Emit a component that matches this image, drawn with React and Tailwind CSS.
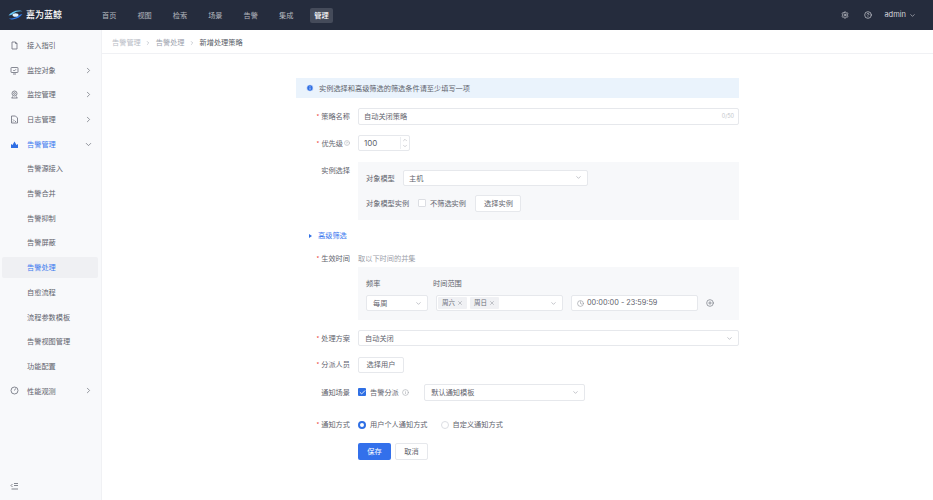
import React from "react";
import {
  ChevronDown,
  ChevronRight,
  CirclePlus,
  Clock,
  HelpCircle,
  Info,
  Settings,
  X,
  Check,
} from "lucide-react";

const nav = ["首页", "视图", "检索", "场景", "告警", "集成", "管理"];

const subMenu = [
  "告警源接入",
  "告警合并",
  "告警抑制",
  "告警屏蔽",
  "告警处理",
  "自愈流程",
  "流程参数模板",
  "告警视图管理",
  "功能配置",
];

const Glyph = ({ children, className = "text-[#71757f]" }) => (
  <svg width="9" height="9" viewBox="0 0 18 18" fill="none" stroke="currentColor" strokeWidth="1.7" className={className}>
    {children}
  </svg>
);

const DocIcon = () => (
  <Glyph>
    <path d="M4 2h7l3 3v11H4z" />
    <path d="M11 2v3h3" />
  </Glyph>
);

const MonitorIcon = () => (
  <Glyph>
    <rect x="2" y="3" width="14" height="10" rx="1" />
    <path d="M6 16h6M6.5 8l2 2 3.500-3.500" />
  </Glyph>
);

const TargetIcon = () => (
  <Glyph>
    <circle cx="9" cy="7" r="5" />
    <circle cx="9" cy="7" r="1.800" />
    <path d="M3 16h12M5 13l-1 3M13 13l1 3" />
  </Glyph>
);

const LogIcon = () => (
  <Glyph>
    <path d="M3 2h8l4 4v10H3z" />
    <path d="M6 9l2 2-2 2M10 13h2" />
  </Glyph>
);

const AlarmIcon = () => (
  <svg width="9" height="9" viewBox="0 0 18 18" fill="#2f6fe4">
    <path d="M2 16V8l3 2 4-7 4 7 3-2v8z" />
  </svg>
);

const GaugeIcon = () => (
  <Glyph>
    <circle cx="9" cy="9" r="7" />
    <path d="M9 9l2-4" />
  </Glyph>
);

const CollapseIcon = () => (
  <svg width="9" height="9" viewBox="0 0 18 18" fill="none" stroke="#5f636d" strokeWidth="1.5">
    <path d="M5 4L2 7l3 3M8 3h8M8 7h8M3 14h13" />
  </svg>
);

const MenuItem = ({ icon, label, arrow, active }) => (
  <div className="h-[24.7px] flex items-center pl-[10px] pr-[8px] shrink-0">
    <span className="w-[17px] shrink-0 flex">{icon}</span>
    <span className={`flex-1 ${active ? "text-[#3a78ef]" : "text-[#5f636d]"}`}>{label}</span>
    {arrow === "right" && <ChevronRight size={9} className="text-[#71757f]" />}
    {arrow === "down" && <ChevronDown size={9} className="text-[#71757f]" />}
  </div>
);

const Sidebar = () => (
  <aside className="w-[102px] shrink-0 bg-[#f8f9fb] border-r border-[#f0f1f4] flex flex-col pt-[3px] pb-[9px]">
    <MenuItem icon={<DocIcon />} label="接入指引" />
    <MenuItem icon={<MonitorIcon />} label="监控对象" arrow="right" />
    <MenuItem icon={<TargetIcon />} label="监控管理" arrow="right" />
    <MenuItem icon={<LogIcon />} label="日志管理" arrow="right" />
    <MenuItem icon={<AlarmIcon />} label="告警管理" arrow="down" active />
    {subMenu.map((item) =>
      item === "告警处理" ? (
        <div key={item} className="h-[24.7px] flex items-center shrink-0 px-[2px]">
          <div className="w-[96px] h-[21px] flex items-center pl-[25px] bg-[#eff0f3] rounded-[2px] text-[#3a78ef]">
            {item}
          </div>
        </div>
      ) : (
        <div key={item} className="h-[24.7px] flex items-center pl-[27px] text-[#5f636d] shrink-0">
          {item}
        </div>
      )
    )}
    <MenuItem icon={<GaugeIcon />} label="性能观测" arrow="right" />
    <div className="mt-auto pl-[10px]">
      <CollapseIcon />
    </div>
  </aside>
);

const Logo = () => (
  <div className="flex items-center gap-[3px] w-[102px] pl-[8px] shrink-0">
    <svg width="15" height="10" viewBox="0 0 30 20">
      <path d="M1 11C5 5 13 1 22 1c3 0 5 .5 7 2-7-1-13 0-18 4-3 2.500-6 4-10 4Z" fill="#62c6f6" />
      <path d="M29 8c-4 6-11 10-20 11-3 0-5-.5-7-2 7 0 13-1 18-5 3-2.500 6-4 9-4Z" fill="#2f7bea" />
      <ellipse cx="15" cy="10" rx="6" ry="3.500" fill="#dff2ff" />
    </svg>
    <span className="text-white text-[9px] font-medium">嘉为蓝鲸</span>
  </div>
);

const Header = () => (
  <header className="h-[30px] shrink-0 bg-[#252c3d] flex items-center">
    <Logo />
    <nav className="flex items-center gap-[21px]">
      {nav.map((item) =>
        item === "管理" ? (
          <span key={item} className="bg-[#454b5a] text-white font-medium rounded-[2px] px-[4px] h-[15px] -mx-[4px] flex items-center">
            {item}
          </span>
        ) : (
          <span key={item} className="text-[#b3b6bd]">
            {item}
          </span>
        )
      )}
    </nav>
    <div className="ml-auto flex items-center text-[#d5d7dc] pr-[17px]">
      <Settings size={8} className="mr-[15px]" />
      <HelpCircle size={8} className="mr-[12px]" />
      <span className="mr-[3px] text-[7.500px] font-['Inter']">admin</span>
      <ChevronDown size={7} />
    </div>
  </header>
);

const Field = ({ label, required, hint, className = "", children }) => (
  <div className={`flex ${className}`}>
    <div className="w-[54px] shrink-0 h-[16.500px] flex items-center justify-end text-[#5f636d]">
      {required && <span className="text-[#ea3636] mr-[2px] text-[6px]">*</span>}
      {label}
      {hint && <HelpCircle size={6} className="text-[#a9acb3] ml-[1px]" />}
    </div>
    <div className="flex-1 ml-[8px] min-w-0">{children}</div>
  </div>
);

const Select = ({ value, className = "" }) => (
  <div className={`h-[16.500px] bg-white border border-[#e6e8ec] rounded-[2px] flex items-center justify-between pl-[6px] pr-[5px] text-[#5f636d] ${className}`}>
    <span>{value}</span>
    <ChevronDown size={7} className="text-[#9a9da5]" />
  </div>
);

const Button = ({ children, className = "" }) => (
  <div className={`h-[16.500px] bg-white border border-[#e6e8ec] rounded-[2px] flex items-center justify-center text-[#5f636d] ${className}`}>
    {children}
  </div>
);

const Tag = ({ children }) => (
  <span className="h-[12px] bg-[#f0f1f4] rounded-[1px] px-[4px] flex items-center gap-[2px] text-[6.500px] text-[#6b6f78]">
    {children}
    <X size={6} className="text-[#8d9098]" />
  </span>
);

const Form = () => (
  <div className="w-[443px] mx-auto pt-[24px]">
    <div className="h-[20px] bg-[#eaf3fc] flex items-center pl-[10px] text-[#5f636d]">
      <Info size={8} fill="#2f6fe4" className="text-white mr-[5px]" />
      实例选择和高级筛选的筛选条件请至少填写一项
    </div>

    <Field label="策略名称" required className="mt-[10.300px]">
      <div className="h-[16.500px] bg-white border border-[#e6e8ec] rounded-[2px] flex items-center justify-between pl-[5px] pr-[4px] text-[#5f636d]">
        <span>自动关闭策略</span>
        <span className="text-[5.500px] text-[#c2c4ca] font-['Inter']">0/50</span>
      </div>
    </Field>

    <Field label="优先级" required hint className="mt-[10.200px]">
      <div className="w-[52px] h-[16.500px] bg-white border border-[#e6e8ec] rounded-[2px] flex items-center justify-between pl-[5px] pr-[1px] text-[8px] text-[#5f636d]">
        <span className="font-['Inter']">100</span>
        <span className="flex flex-col text-[#a4a7ae] border-l border-[#eceef1] pl-[1px]">
          <ChevronDown size={6} className="rotate-180" />
          <ChevronDown size={6} />
        </span>
      </div>
    </Field>

    <Field label="实例选择" className="mt-[10.200px]">
      <div className="h-[58px] bg-[#f7f8fa] pl-[8px] pt-[8px]">
        <div className="flex items-center">
          <span className="w-[37px] text-[#5f636d]">对象模型</span>
          <Select value="主机" className="w-[185px] !pl-[5px]" />
        </div>
        <div className="flex items-center mt-[9px]">
          <span className="w-[51px] text-[#5f636d] shrink-0">对象模型实例</span>
          <span className="w-[8px] h-[8px] bg-white border border-[#dcdee3] rounded-[1px] ml-[1px] mr-[4px]" />
          <span className="text-[#5f636d]">不筛选实例</span>
          <Button className="w-[46px] ml-[9.500px]">选择实例</Button>
        </div>
      </div>
    </Field>

    <div className="flex items-center mt-[11px] h-[10px] pl-[13px] text-[#3a78ef]">
      <span className="w-0 h-0 border-y-[2.500px] border-y-transparent border-l-[3px] border-l-[#2f6fe4] mr-[6px]" />
      高级筛选
    </div>

    <Field label="生效时间" required className="mt-[9.750px]">
      <div className="h-[10px] flex items-center text-[#9da1aa] mt-[3.250px]">取以下时间的并集</div>
    </Field>

    <div className="ml-[62px] h-[52.700px] bg-[#f7f8fa] pl-[8px] pt-[11px]">
      <div className="flex text-[#5f636d] h-[10px] items-center">
        <span className="w-[67px]">频率</span>
        <span>时间范围</span>
      </div>
      <div className="flex items-center mt-[7px]">
        <Select value="每周" className="w-[62px]" />
        <div className="w-[127px] h-[16.500px] ml-[8px] bg-white border border-[#e6e8ec] rounded-[2px] flex items-center pl-[1px] pr-[5px] gap-[3px]">
          <Tag>周六</Tag>
          <Tag>周日</Tag>
          <ChevronDown size={7} className="ml-auto text-[#9a9da5]" />
        </div>
        <div className="w-[127px] h-[16.500px] ml-[8px] bg-white border border-[#e6e8ec] rounded-[2px] flex items-center pl-[5px] text-[#5f636d]">
          <Clock size={7} className="text-[#8d9098] mr-[3px]" />
          <span className="text-[7.300px] font-['Inter']">00:00:00 - 23:59:59</span>
        </div>
        <CirclePlus size={8} className="ml-[8px] text-[#71757f]" />
      </div>
    </div>

    <Field label="处理方案" required className="mt-[10.300px]">
      <Select value="自动关闭" />
    </Field>

    <Field label="分派人员" required className="mt-[10.200px]">
      <Button className="w-[46px]">选择用户</Button>
    </Field>

    <Field label="通知场景" className="mt-[11px]">
      <div className="flex items-center h-[16.500px]">
        <span className="w-[8px] h-[8px] bg-[#2f6fe4] rounded-[1px] flex items-center justify-center">
          <Check size={7} strokeWidth={3} className="text-white" />
        </span>
        <span className="ml-[4px] text-[#5f636d]">告警分派</span>
        <Info size={7} className="ml-[3px] text-[#a4a7ae]" />
        <Select value="默认通知模板" className="w-[161px] ml-[15.500px]" />
      </div>
    </Field>

    <Field label="通知方式" required className="mt-[15.750px]">
      <div className="flex items-center h-[16.500px] text-[#5f636d]">
        <span className="w-[8px] h-[8px] rounded-full border-[2.500px] border-[#2f6fe4] bg-white" />
        <span className="ml-[4px]">用户个人通知方式</span>
        <span className="w-[8px] h-[8px] rounded-full border border-[#dcdee3] bg-white ml-[13px]" />
        <span className="ml-[4px]">自定义通知方式</span>
      </div>
    </Field>

    <div className="flex ml-[62px] mt-[10.500px] gap-[4px]">
      <div className="w-[33px] h-[16.500px] bg-[#3370eb] rounded-[2px] flex items-center justify-center text-white">保存</div>
      <Button className="w-[33px]">取消</Button>
    </div>
  </div>
);

export default function App() {
  return (
    <div className="h-[500px] w-[933px] overflow-hidden flex flex-col bg-white text-[7.200px] font-['Noto_Sans_CJK_SC','Inter',sans-serif]">
      <Header />
      <div className="flex flex-1 min-h-0">
        <Sidebar />
        <main className="flex-1 min-w-0">
          <div className="h-[24px] pt-[2px] border-b border-[#f0f1f4] flex items-center pl-[10px] text-[#b8bcc5]">
            <span>告警管理</span>
            <ChevronRight size={6} className="mx-[4.500px] text-[#9aa0ac]" />
            <span className="text-[#9aa0ac]">告警处理</span>
            <ChevronRight size={6} className="mx-[4.500px] text-[#9aa0ac]" />
            <span className="text-[#555963]">新增处理策略</span>
          </div>
          <Form />
        </main>
      </div>
    </div>
  );
}
